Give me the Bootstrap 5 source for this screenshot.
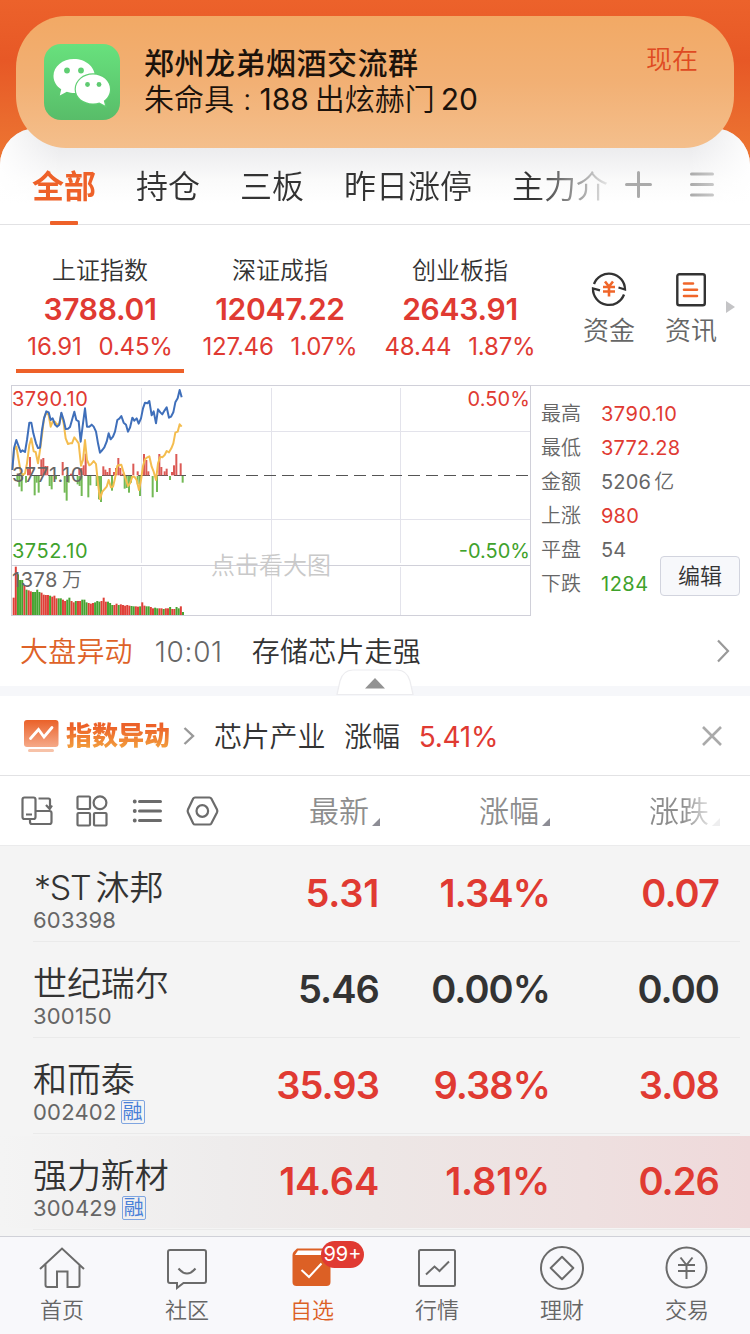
<!DOCTYPE html>
<html lang="zh-CN">
<head>
<meta charset="utf-8">
<meta name="viewport" content="width=device-width, initial-scale=1">
<title>自选</title>
<link rel="stylesheet" href="https://cdn.jsdelivr.net/npm/bootstrap@5.3.0/dist/css/bootstrap.min.css">
<style>
  :root { --up:#e03a32; --down:#3fa22c; --ink:#333; --dim:#666; --brand:#ee6129; }
  body { width:750px; height:1334px; overflow:hidden; background:#fff; color:var(--ink);
    font-family:Inter,"Noto Sans CJK SC",sans-serif; font-weight:350; line-height:1; white-space:nowrap; }
  svg { display:block; flex:none; }
  .num { font-weight:370; }
  .up { color:var(--up); } .down { color:var(--down); } .dim { color:var(--dim); }
  .screen { width:750px; height:1334px; }
  .backdrop { background:linear-gradient(#ec622b 0,#e75826 60px,#ea6b2e 120px,#ee7833 170px); height:225px; padding-top:128px; }
  .sheet { height:97px; border-radius:37px 37px 0 0; border-bottom:1px solid #e2e2e4;
    background:linear-gradient(#e6e6e8 0,#ececee 20px,#fafafa 52px,#fff 75px); position:relative; }
  .sheet::before, .sheet::after { content:""; position:absolute; top:0; bottom:0; width:60px; }
  .sheet::before { left:0; border-radius:37px 0 0 0; background:linear-gradient(90deg,rgba(255,255,255,.9),rgba(255,255,255,0)); }
  .sheet::after { right:0; border-radius:0 37px 0 0; background:linear-gradient(270deg,rgba(255,255,255,.9),rgba(255,255,255,0)); }
  .tabs { height:97px; padding:21px 0 0 32px; gap:40px; font-size:32px; line-height:75px; width:608px; overflow:hidden;
    -webkit-mask-image:linear-gradient(90deg,#000 535px,rgba(0,0,0,.1) 608px); }
  .tabs .active { color:var(--brand); font-weight:600; position:relative; }
  .tabs .active::after { content:""; position:absolute; left:18px; bottom:0; width:28px; height:4px; border-radius:1px; background:var(--brand); }
  .notice { left:16px; top:16px; width:718px; height:132px; border-radius:50px/52px; padding:28px 36px 0 28px; color:#1b120b;
    background:linear-gradient(#f2a965 0,#f2b074 50%,#f4bf8c 100%); z-index:2; }
  .notice h6 { font-size:30px; line-height:36px; letter-spacing:.5px; font-weight:500; margin:1px 0 0; }
  .notice p { font-size:30px; line-height:36px; margin:0; }
  .indices { height:160px; padding-left:10px; }
  .idx { width:180px; text-align:center; padding-top:31px; position:relative; }
  .idx .t { font-size:24px; line-height:30px; }
  .idx .v { font-size:30px; line-height:30px; margin-top:8px; font-weight:600; letter-spacing:-.25px; }
  .idx .c { font-size:24px; line-height:30px; margin-top:8px; gap:17px; letter-spacing:-.2px; }
  .idx.on::after { content:""; position:absolute; left:6px; right:6px; bottom:12px; height:4px; background:var(--brand); }
  .quick { font-size:26px; line-height:32px; width:82px; padding-top:45px; color:#666; }
  .market { height:231px; }
  .chart { width:520px; margin-left:11px; position:relative; font-size:20px; }
  .chart span { position:absolute; line-height:24px; font-weight:370; letter-spacing:.5px; }
  .stats { flex:1; border-top:1px solid #d4d4dc; padding:11px 0 0 10px; font-size:20px; line-height:34px; position:relative; }
  .stats .k { width:60px; color:#666; } .stats .num { letter-spacing:.5px; }
  .editbtn { position:absolute; left:129px; top:170px; width:80px; height:40px; padding:0; font-size:22px; line-height:39px;
    background:#f7f8fb; border:1px solid #d2d4de; border-radius:4px; color:#333; text-align:center; font-weight:350; }
  .news { height:70px; padding:1px 20px 0; font-size:28px; letter-spacing:.2px; }
  .strip { height:10px; background:#f6f7fa; position:relative; }
  .strip svg { position:absolute; left:335px; top:-18px; }
  .banner { height:80px; border-bottom:1px solid #e2e2e4; padding:1px 26px 0 23px; font-size:28px; }
  .grad { font-size:26px; font-weight:900; line-height:32px; background:linear-gradient(#ec6129 20%,#f3a03e 90%); -webkit-background-clip:text; background-clip:text; color:transparent; }
  .cols { height:69px; color:#8d8d8d; font-size:30px; padding-left:21px; }
  .cols .h { text-align:right; gap:3px; }
  .tri { width:0; height:0; border-left:8px solid transparent; border-bottom:8px solid #8d8d95; margin-top:22px; }
  .list { background:#f4f4f4; height:391px; border-top:1px solid #ebebec; }
  .stock { height:96px; position:relative; padding-left:33px; }
  .stock::after { content:""; position:absolute; left:33px; right:10px; bottom:0; height:1px; background:#eaeaea; }
  .stock .n { font-size:34px; line-height:38px; letter-spacing:-.1px; padding-top:23px; height:61px; }
  .stock .id { font-size:22px; line-height:26px; color:#666; gap:4px; letter-spacing:.2px; }
  .stock .q { font-size:38px; line-height:94px; font-weight:580; text-align:right; letter-spacing:-.9px; }
  .stock .q.wide { letter-spacing:-.2px; }
  .q1 { width:179px; } .q2 { width:171px; } .q3 { width:169px; }
  .stock.flash::before { content:""; position:absolute; left:0; right:0; top:2px; bottom:2px; background:linear-gradient(90deg,#f4f4f4,#eeecec 30%,#ede7e6 50%,#eee0e0 78%,#efd9da); }
  .stock > * { position:relative; }
  .tag { width:24px; height:24px; margin-top:1px; border:1px solid #7fa5e0; border-radius:2px; font-size:20px; line-height:22px; color:#4a80d8; text-align:center; letter-spacing:0; }
  .dock { height:98px; border-top:1px solid #d0d1d8; background:#f8f8fb; font-size:22px; color:#666; }
  .dock > div { width:125px; padding:7px 1px 0 0; position:relative; }
  .dock .lb { line-height:28px; }
  .count { position:absolute; left:71px; top:4px; width:43px; height:27px; border-radius:14px; background:#e03a32; color:#fff; font-size:20px; line-height:27px; text-align:center; font-weight:370; }
</style>
<script src="https://cdn.jsdelivr.net/npm/bootstrap@5.3.0/dist/js/bootstrap.bundle.min.js"></script>
</head>
<body>
<main class="screen d-flex flex-column position-relative">

  <div class="notice position-absolute d-flex">
    <svg width="76" height="76" viewBox="0 0 76 76">
      <defs><linearGradient id="wx" x2="0" y2="1"><stop offset="0" stop-color="#68e17d"/><stop offset="1" stop-color="#58bd69"/></linearGradient></defs>
      <rect width="76" height="76" rx="17" fill="url(#wx)"/>
      <path d="M30 15c-11.500 0-20.500 7.500-20.500 17 0 5.500 3 10.200 7.700 13.300L15.800 51.500l7-3.700c2.500.8 5 1.200 8 1.200 11 0 20-7.600 20-17S41.500 15 30 15z" fill="#fff"/>
      <circle cx="23" cy="26.500" r="2.900" fill="#5fce72"/><circle cx="37" cy="26.500" r="2.900" fill="#5fce72"/>
      <path d="M49 30.500c9.600 0 17 6.500 17 14.700 0 4.700-2.400 8.800-6.200 11.500l1.200 4.800-5.700-3c-2 .6-4 .9-6.300.9-9.600 0-17.200-6.100-17.200-14.200S39.400 30.500 49 30.500z" fill="#fff" stroke="#60cf73" stroke-width="2.400" paint-order="stroke"/>
      <circle cx="43.500" cy="40.500" r="2.400" fill="#5fca71"/><circle cx="55" cy="40.500" r="2.400" fill="#5fca71"/>
    </svg>
    <div class="flex-grow-1" style="margin-left:24px">
      <h6>郑州龙弟烟酒交流群</h6>
      <p>朱命具<span style="margin:0 8px 0 9px">:</span><span class="num">188</span><span style="margin:0 6px">出炫赫门</span><span class="num">20</span></p>
    </div>
    <div style="font-size:26px;line-height:32px;color:#df4a22">现在</div>
  </div>

  <div class="backdrop">
    <div class="sheet d-flex">
      <nav class="tabs d-flex"><span class="active">全部</span><span>持仓</span><span>三板</span><span>昨日涨停</span><span>主力介</span></nav>
      <svg width="140" height="96" viewBox="608 128 140 96" stroke="#aaa" stroke-width="3" stroke-linecap="round"><path d="M626.500 184.500h24M638.500 172.500v24M691.500 174h21M691.500 184.500h21M691.500 195h21"/></svg>
    </div>
  </div>

  <section class="indices d-flex">
    <div class="idx on"><div class="t">上证指数</div><div class="v up">3788.01</div><div class="c up num d-flex justify-content-center"><span>16.91</span><span>0.45%</span></div></div>
    <div class="idx"><div class="t">深证成指</div><div class="v up">12047.22</div><div class="c up num d-flex justify-content-center"><span>127.46</span><span>1.07%</span></div></div>
    <div class="idx"><div class="t">创业板指</div><div class="v up">2643.91</div><div class="c up num d-flex justify-content-center"><span>48.44</span><span>1.87%</span></div></div>
    <div class="quick d-flex flex-column align-items-center" style="margin-left:18px">
      <svg width="38" height="38" viewBox="0 0 38 38" fill="none" stroke="#333" stroke-width="2.300"><path d="M4 14A16 16 0 0 1 35 19.500l-6.500-2M34 24.500A16 16 0 0 1 3 18.500l7 1.800"/><path d="M15 11.500l4 5 4-5M13 17h12M13 21.500h12M19 17v9.500" stroke="#f0662a" stroke-width="2.600"/></svg>
      <div style="margin-top:7px">资金</div>
    </div>
    <div class="quick d-flex flex-column align-items-center">
      <svg width="38" height="38" viewBox="0 0 38 38" fill="none"><rect x="5.300" y="4.300" width="27.500" height="31" rx="2" stroke="#333" stroke-width="2.400"/><path d="M12 13.500h9M12 19.800h13M12 26h13" stroke="#f0662a" stroke-width="2.600" stroke-linecap="round"/></svg>
      <div style="margin-top:7px">资讯</div>
    </div>
    <svg width="18" height="160" viewBox="732 225 18 160" class="overflow-visible"><path d="M726 301l9 6-9 6z" fill="#c4c4c6"/></svg>
  </section>

  <section class="market d-flex">
    <div class="chart">
      <svg id="plot" width="520" height="231" viewBox="33 15 1560 693" fill="none">
        <path d="M33 16.500h1560M34.500 15v693M1591.500 15v693M33 556.500h1560M33 706.500h1560" stroke="#d0d0d9" stroke-width="3"/>
        <path d="M36 154.500h1554M36 418.500h1554M424.500 24v525M814.500 24v525M1201.500 24v525M424.500 561v144M814.500 561v144M1201.500 561v144" stroke="#e3e3eb" stroke-width="3"/>
        <path d="M36 286.500h1554" stroke="#555" stroke-width="3" stroke-dasharray="36 18"/>
        <g id="bars"></g>
        <polyline stroke="#f4bd4f" stroke-width="6" stroke-linejoin="round" points="37,270 42,210 49,200 56,240 62,275 68,285 75,280 81,250 88,195 94,175 101,214 107,216 114,250 120,210 126,165 132,115 139,97 146,105 152,140 158,125 165,125 171,135 178,130 184,102 191,130 197,175 204,192 210,190 216,190 223,172 229,180 236,190 243,257 249,240 255,180 261,240 268,256 274,252 281,243 288,252 294,310 300,357 307,335 313,328 320,320 326,300 333,322 339,320 345,295 352,258 358,255 364,254 371,278 378,300 384,318 390,310 397,290 403,290 410,300 417,330 423,300 429,258 435,238 442,232 448,229 455,260 461,275 468,300 474,250 481,230 487,232 494,225 500,213 507,217 514,205 520,190 526,158 533,155 539,133 545,140"/>
        <polyline stroke="#3f6fba" stroke-width="6" stroke-linejoin="round" points="37,270 42,205 49,180 62,216 67,211 75,216 81,180 88,128 94,128 100,160 108,190 114,204 120,203 126,150 132,115 139,94 146,97 152,120 158,115 165,134 171,140 178,134 184,98 191,120 197,147 204,146 210,141 216,120 223,95 229,120 236,124 242,185 249,130 255,85 261,140 268,140 275,134 281,140 288,155 294,190 300,218 307,210 313,202 320,185 326,160 332,178 339,170 345,155 352,120 358,116 364,108 371,128 378,134 384,155 390,143 397,113 403,122 410,115 416,131 423,115 429,85 435,68 442,70 448,63 455,106 461,94 468,130 474,88 481,97 487,103 494,91 500,82 507,113 513,110 520,97 526,67 533,55 539,30 545,52"/>
      </svg>
      <span class="up" style="left:1px;top:2px">3790.10</span>
      <span style="left:1px;top:78px;color:#666">3771.10</span>
      <span class="down" style="left:1px;top:154px">3752.10</span>
      <span style="left:1px;top:183px;color:#666">1378<b style="font-weight:350;margin-left:4px">万</b></span>
      <span class="up" style="right:1px;top:2px;letter-spacing:.1px">0.50%</span>
      <span class="down" style="right:1px;top:154px;letter-spacing:0">-0.50%</span>
      <span style="left:200px;top:169px;font-size:24px;font-weight:350;letter-spacing:0;color:#c9c9c9">点击看大图</span>
    </div>
    <div class="stats">
      <div class="d-flex"><span class="k">最高</span><span class="num up">3790.10</span></div>
      <div class="d-flex"><span class="k">最低</span><span class="num up" style="letter-spacing:.2px">3772.28</span></div>
      <div class="d-flex"><span class="k">金额</span><span class="num dim" style="letter-spacing:.2px">5206</span><span class="dim" style="margin-left:3px">亿</span></div>
      <div class="d-flex"><span class="k">上涨</span><span class="num up" style="letter-spacing:.2px">980</span></div>
      <div class="d-flex"><span class="k">平盘</span><span class="num dim" style="letter-spacing:.2px">54</span></div>
      <div class="d-flex"><span class="k">下跌</span><span class="num down">1284</span></div>
      <button class="editbtn" type="button">编辑</button>
    </div>
  </section>

  <section class="news d-flex align-items-center">
    <span style="color:#de6228">大盘异动</span>
    <span class="dim" style="margin-left:22px;width:97px;letter-spacing:.7px">10:01</span>
    <span>存储芯片走强</span>
    <svg class="ms-auto" style="margin-top:-1px" width="14" height="24" viewBox="0 0 14 24" fill="none" stroke="#999" stroke-width="2.200"><path d="M2 1.500l10 10.500L2 22.500"/></svg>
  </section>
  <div class="strip">
    <svg width="80" height="28" viewBox="0 0 80 28"><path d="M2 26.500L5 13Q8 2 18 2h44q10 0 13 11l3 13.500z" fill="#fff" stroke="#ececef" stroke-width="1.200"/><path d="M30 20.500L40 10l10 10.500z" fill="#929292"/></svg>
  </div>

  <section class="banner d-flex align-items-center">
    <svg width="37" height="36" viewBox="0 0 37 36"><defs><linearGradient id="ba" x2="0" y2="1"><stop offset="0" stop-color="#ea6129"/><stop offset="1" stop-color="#f5a988"/></linearGradient></defs><rect x="1" y="2" width="34.500" height="27" rx="3" fill="url(#ba)"/><path d="M7.500 20.500l8-9 5.500 7.500 8-9.500" fill="none" stroke="#fff" stroke-width="2.800" stroke-linecap="round"/><path d="M6.500 32.500h23" stroke="#f7c2a8" stroke-width="3" stroke-linecap="round"/></svg>
    <span class="grad" style="margin-left:6px">指数异动</span>
    <svg style="margin-left:13px" width="12" height="20" viewBox="0 0 12 20" fill="none" stroke="#999" stroke-width="2.400"><path d="M1.500 2l8.500 8-8.500 8"/></svg>
    <span style="margin-left:19px;margin-top:1px;letter-spacing:-.2px">芯片产业</span>
    <span style="margin-left:19px;margin-top:1px;letter-spacing:-.2px">涨幅</span>
    <span class="up num" style="margin-left:19px;margin-top:1px;letter-spacing:-.3px">5.41%</span>
    <svg class="ms-auto" width="24" height="24" viewBox="0 0 24 24" stroke="#aaa" stroke-width="2.600"><path d="M3 3l18 18M21 3L3 21"/></svg>
  </section>

  <section class="cols d-flex align-items-center">
    <svg width="200" height="34" viewBox="21.500 794 200 34" fill="none" stroke="#6b6b6b" stroke-width="2.200">
      <rect x="23" y="797.500" width="13" height="21.500" rx="2"/><path d="M26.500 814.500h6M39 798.500h10q1.500 0 1.500 1.500v7.500M46.500 805l3.700 4 2.300-3.500M30.500 819v3q0 2 2 2h17.500q2 0 2-2V813q0-2-2-2H36"/>
      <rect x="78" y="796.500" width="12.500" height="12.500" rx="1"/><circle cx="100.500" cy="802.800" r="6.400"/><rect x="78" y="813" width="12.500" height="12.500" rx="1"/><rect x="94.500" y="813" width="12.500" height="12.500" rx="1"/>
      <path d="M140 801.500h21M140 811h21M140 820.500h21" stroke-width="3" stroke-linecap="round"/><path d="M135.200 801.500h.1M135.200 811h.1M135.200 820.500h.1" stroke-width="3.800" stroke-linecap="round"/>
      <path d="M195.500 797.500h14.500q1.200 0 1.800 1l5.700 11q.7 1.500 0 3l-5.700 11q-.6 1-1.800 1H195.500q-1.200 0-1.800-1l-5.200-11q-.7-1.500 0-3l5.200-11q.6-1 1.800-1z"/><circle cx="202.800" cy="811" r="5.800"/>
    </svg>
    <div class="h d-flex align-items-center justify-content-end" style="width:159px;padding-top:1px">最新<i class="tri"></i></div>
    <div class="h d-flex align-items-center justify-content-end" style="width:170px;padding-top:1px">涨幅<i class="tri"></i></div>
    <div class="h d-flex align-items-center justify-content-end" style="width:170px;padding-top:1px;-webkit-mask-image:linear-gradient(90deg,#000 78%,rgba(0,0,0,.15) 96%)">涨跌<i class="tri"></i></div>
  </section>

  <section class="list">
    <div class="stock d-flex"><div style="width:167px"><div class="n"><span style="letter-spacing:-1.200px;margin-left:1px">*ST</span><span style="margin-left:5px">沐邦</span></div><div class="id num d-flex">603398</div></div><div class="q q1 up wide">5.31</div><div class="q q2 up">1.34%</div><div class="q q3 up">0.07</div></div>
    <div class="stock d-flex"><div style="width:167px"><div class="n">世纪瑞尔</div><div class="id num d-flex">300150</div></div><div class="q q1">5.46</div><div class="q q2">0.00%</div><div class="q q3">0.00</div></div>
    <div class="stock d-flex"><div style="width:167px"><div class="n">和而泰</div><div class="id num d-flex">002402<span class="tag">融</span></div></div><div class="q q1 up">35.93</div><div class="q q2 up">9.38%</div><div class="q q3 up">3.08</div></div>
    <div class="stock flash d-flex"><div style="width:167px"><div class="n">强力新材</div><div class="id num d-flex">300429<span class="tag" style="margin-left:1px">融</span></div></div><div class="q q1 up wide">14.64</div><div class="q q2 up wide">1.81%</div><div class="q q3 up">0.26</div></div>
  </section>

  <nav class="dock d-flex">
    <div class="d-flex flex-column align-items-center">
      <svg width="50" height="52" viewBox="0 0 50 52" fill="none" stroke="#6b6b6b" stroke-width="2"><path d="M3 25L25 4.500 47 25M8.500 20.500V41q0 2 2 2h9.500V27.500h10.500V43h10q2 0 2-2V20.500"/></svg><div class="lb">首页</div></div>
    <div class="d-flex flex-column align-items-center">
      <svg width="50" height="52" viewBox="0 0 50 52" fill="none" stroke="#6b6b6b" stroke-width="2"><path d="M8 6h34q2 0 2 2v29q0 2-2 2H21.500L15 44v-5H8q-2 0-2-2V8q0-2 2-2z"/><path d="M16.500 24.500q8.500 10 17 0"/></svg><div class="lb">社区</div></div>
    <div class="d-flex flex-column align-items-center" style="color:#dc6025">
      <svg width="50" height="52" viewBox="0 0 50 52" fill="none"><path d="M10 4.500h29q1.500 0 2.300 1.200L43.500 10v28q0 4-4 4h-30q-4 0-4-4V11q0-1.500 1-3z" fill="#dc6025"/><path d="M11 6.500h32v4.500H8z" fill="#fff"/><path d="M14.500 26l7.500 7L34.500 19.500" stroke="#fff" stroke-width="2"/></svg><div class="lb">自选</div><div class="count">99+</div></div>
    <div class="d-flex flex-column align-items-center">
      <svg width="50" height="52" viewBox="0 0 50 52" fill="none" stroke="#6b6b6b" stroke-width="2"><rect x="7" y="6" width="36" height="36" rx="1.500"/><path d="M14 30.500l8.500-8 5 4.500L37 17.500"/></svg><div class="lb">行情</div></div>
    <div class="d-flex flex-column align-items-center">
      <svg width="50" height="52" viewBox="0 0 50 52" fill="none" stroke="#6b6b6b" stroke-width="2"><circle cx="25" cy="24" r="21"/><path d="M25 12.700L36.300 24 25 35.300 13.700 24z" stroke-linejoin="round"/></svg><div class="lb">理财</div></div>
    <div class="d-flex flex-column align-items-center">
      <svg width="50" height="52" viewBox="0 0 50 52" fill="none" stroke="#6b6b6b" stroke-width="2"><circle cx="24.500" cy="23.500" r="20"/><path d="M18.500 13.500l6 7.500 6-7.500M16 21h17M16 27h17M24.500 21v14"/></svg><div class="lb">交易</div></div>
  </nav>
</main>
<script>
  // Momentum bars round the previous close: [x, signed height]
  const pulse = [[84,20],[90,55],[124,48],[130,52],[136,28],[142,28],[188,40],[213,5],[238,22],[245,22],[251,30],[257,65],[310,27],[316,17],[322,10],[329,22],[342,10],[348,22],[355,52],[361,22],[368,5],[400,35],[413,12],[432,64],[439,46],[445,12],[478,64],[484,25],[494,12],[500,20],[516,10],[522,30],[529,64],[542,36],
    [52,-15],[58,-32],[65,-46],[78,-20],[104,-58],[110,-20],[116,-50],[149,-30],[155,-40],[168,-10],[194,-50],[200,-74],[206,-20],[233,-25],[239,-30],[245,-60],[265,-64],[271,-28],[290,-30],[297,-70],[303,-78],[336,-44],[374,-38],[380,-36],[387,-50],[393,-20],[413,-25],[420,-60],[458,-64],[471,-48],[510,-12],[548,-20]];
  const volume = [52,145,122,105,105,88,76,74,74,71,69,69,76,69,67,61,60,60,58,55,58,50,50,50,50,46,42,46,52,42,38,42,42,42,46,50,46,38,36,34,36,38,42,40,42,52,40,40,36,30,30,30,34,30,32,30,28,30,28,27,26,26,25,24,26,38,28,26,26,24,20,22,20,20,20,18,20,18,20,24,18,18,24,20,26,9];
  const tone = 'rrgggrgrrggggrrrrgrrrggrrggrrgrrgggrrrgggrrrgggrrgrrrrrggrrgrrggrrggrrgrrgrrggrrrg';
  let out = pulse.map(([x,h]) => `<rect x="${x-3}" y="${h>0?286-h:288}" width="6" height="${Math.abs(h)}" fill="${h>0?'#db5a55':'#73b956'}"/>`).join('');
  const n = 80, step = 6.43;
  for (let i = 0; i < n; i++) {
    const h = i === n-1 ? 9 : volume[Math.min(volume.length-2, Math.round(i*84/78))];
    out += `<rect x="${38+i*step}" y="${705-h}" width="6" height="${h}" fill="${i===n-1||tone[i]==='g'?'#46a331':'#df4038'}"/>`;
  }
  document.getElementById('bars').innerHTML = out;
</script>
</body>
</html>
